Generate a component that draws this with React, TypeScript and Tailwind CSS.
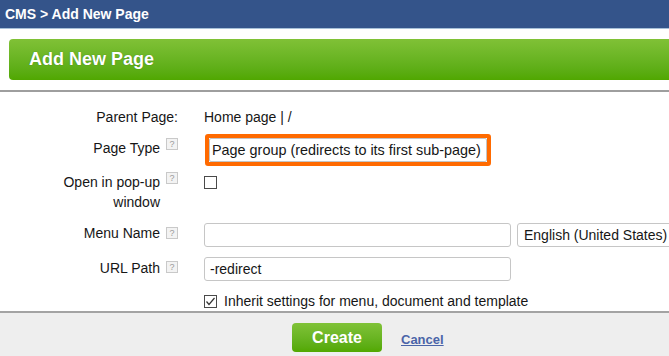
import React from "react";

function Help() {
  return (
    <span className="ml-[6px] mt-[4px] flex h-[12px] w-[12px] shrink-0 items-center justify-center border border-[#c9c9c9] bg-[#f3f3f3] text-[9px] leading-none text-[#9b9b9b]">
      ?
    </span>
  );
}

function Box({ checked }: { checked?: boolean }) {
  return (
    <svg width="13" height="13" viewBox="0 0 13 13" className="shrink-0">
      <rect x="0.5" y="0.5" width="12" height="12" fill="#fff" stroke="#4a4a4a" />
      {checked && (
        <polyline points="2.5,6.5 5,9.5 10.5,3" fill="none" stroke="#333" strokeWidth="1.2" />
      )}
    </svg>
  );
}

function Label({ children, help }: { children: React.ReactNode; help?: boolean }) {
  return (
    <div className="flex w-[178px] shrink-0 items-start justify-end">
      <div className="text-right leading-[20px]">{children}</div>
      {help && <Help />}
    </div>
  );
}

export default function App() {
  return (
    <div className="h-[356px] w-full overflow-hidden bg-white font-['Liberation_Sans',Arial,sans-serif] text-[14px] text-[#161616]">
      <div className="flex h-[28px] items-center bg-[#34548a] pl-[5px] text-[14px] font-bold text-white">
        CMS &gt; Add New Page
      </div>
      <div className="h-px bg-[#a7c1d8]" />
      <div className="ml-[9px] mr-[-10px] mt-[10px] flex h-[41px] items-center rounded-[4px] bg-gradient-to-b from-[#80c136] to-[#50a700] pl-[20px] text-[18px] font-bold text-white [text-shadow:0_0_1px_rgba(0,60,0,0.5)]">
        Add New Page
      </div>
      <div className="mt-[10px] h-[2px] bg-[#9e9e9e]" />

      <div className="flex flex-col">
        <div className="mt-[15px] flex h-[20px] gap-[26px]">
          <Label>Parent Page:</Label>
          <div className="leading-[20px]">Home page | /</div>
        </div>

        <div className="mt-[7px] flex gap-[26px]">
          <Label help>
            <div className="pt-[4px]">Page Type</div>
          </Label>
          <div className="ml-[1px] rounded-[3px] border-[4px] border-[#ff6a00]">
            <div className="flex h-[24px] w-[278px] items-center rounded-[2px] border border-[#c4c4c4] bg-white pl-[2px] text-[14.4px] leading-none">
              Page group (redirects to its first sub-page)
            </div>
          </div>
        </div>

        <div className="mt-[2px] flex gap-[26px]">
          <Label help>
            <div className="pt-[4px]">
              Open in pop-up
              <br />
              window
            </div>
          </Label>
          <div className="mt-[8px]">
            <Box />
          </div>
        </div>

        <div className="mt-[11px] flex gap-[26px]">
          <Label help>
            <div className="pt-[0px]">Menu Name</div>
          </Label>
          <div className="flex gap-[6px]">
            <div className="h-[24px] w-[307px] rounded-[3px] border border-[#c6c6c6] bg-white" />
            <div className="flex h-[24px] w-[180px] items-center rounded-[3px] border border-[#c6c6c6] bg-white pl-[6px]">
              English (United States)
            </div>
          </div>
        </div>

        <div className="mt-[10px] flex gap-[26px]">
          <Label help>
            <div className="pt-[1px]">URL Path</div>
          </Label>
          <div className="flex h-[24px] w-[307px] items-center rounded-[3px] border border-[#c6c6c6] bg-white pl-[5px]">
            -redirect
          </div>
        </div>

        <div className="mt-[11px] flex h-[19px] items-center gap-[26px]">
          <div className="w-[178px] shrink-0" />
          <div className="flex items-center gap-[7px]">
            <Box checked />
            <span>Inherit settings for menu, document and template</span>
          </div>
        </div>
      </div>

      <div className="h-[2px] bg-[#a3a3a3]" />
      <div className="flex h-[60px] items-start bg-[#eeeeee] pl-[292px] pt-[10px]">
        <div className="flex h-[29px] w-[90px] items-center justify-center rounded-[4px] bg-gradient-to-b from-[#80c237] to-[#52a800] text-[16px] font-bold text-white">
          Create
        </div>
        <span className="ml-[19px] mt-[7px] text-[13px] font-bold text-[#4a64a8] underline">Cancel</span>
      </div>
    </div>
  );
}
